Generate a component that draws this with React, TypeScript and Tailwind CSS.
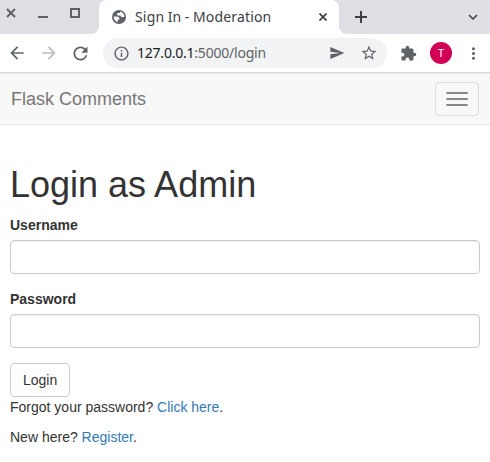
import {
  MdArrowBack,
  MdArrowForward,
  MdExpandMore,
  MdExtension,
  MdInfoOutline,
  MdMoreVert,
  MdRefresh,
  MdSend,
  MdStarBorder,
} from "react-icons/md";

function Globe() {
  return (
    <svg width="14" height="14" viewBox="0 0 14 14" className="shrink-0">
      <circle cx="7" cy="7" r="7" fill="#5f6368" />
      <path
        d="M8.2 1.7c2.4.4 4.2 2.6 4.2 5.2H10c-1 0-1.4-.6-1.4-1.4H6.2c-.8 0-1.2-.7-1.2-1.3 0-.8.6-1.2 1.3-1.2h.6c.8 0 1.3-.5 1.3-1.3z"
        fill="#fff"
      />
      <path
        d="M1.6 6.6h3.3c1.5 0 2.6 1 2.6 2.3v.5H5.9v1.4c0 .5-.3.9-.8 1.1-2.1-.8-3.500-2.800-3.500-5.300z"
        fill="#fff"
      />
    </svg>
  );
}

function TabStrip() {
  return (
    <div className="flex h-[34px] text-[#5f6368]">
      <div className="flex w-[99px] rounded-br-lg bg-[#dee0e6] pl-[5px] pt-[7px]">
        <svg width="82" height="13" viewBox="0 0 82 13" fill="none" stroke="currentColor" strokeWidth="2">
          <path d="M2 2l8 8M10 2l-8 8" />
          <path d="M33 10h10" />
          <path d="M66 2h8v8h-8z" />
        </svg>
      </div>
      <div className="w-[240px] bg-[#dee0e6]">
        <div className="flex h-full items-center rounded-t-lg bg-white pl-[13px] pr-3">
          <Globe />
          <span className="ml-[9px] w-[140px] whitespace-nowrap font-['Noto_Sans',sans-serif] text-[14px] leading-5 tracking-[0.17px] text-[#3c4043] [word-spacing:-0.4px]">
            Sign In - Moderation
          </span>
          <svg width="8" height="8" viewBox="0 0 8 8" stroke="#3c4043" strokeWidth="1.7" className="ml-auto">
            <path d="M.5.5l7 7M7.500.5l-7 7" />
          </svg>
        </div>
      </div>
      <div className="flex flex-1 items-center justify-between rounded-bl-lg bg-[#dee0e6] pl-4 pr-[8px] text-[#3c4043]">
        <svg width="12" height="12" viewBox="0 0 12 12" stroke="currentColor" strokeWidth="2">
          <path d="M6 0v12M0 6h12" />
        </svg>
        <MdExpandMore size={18} />
      </div>
    </div>
  );
}

function Toolbar() {
  return (
    <div className="flex h-[38px] items-center bg-white text-[#5f6368]">
      <MdArrowBack size={20} className="ml-[7px]" />
      <MdArrowForward size={20} className="ml-3 text-[#babcbe]" />
      <MdRefresh size={21} className="ml-[11px]" />
      <div className="ml-[12px] flex h-[30px] w-[284px] items-center rounded-full bg-[#f1f3f4] pl-[10px] pr-[9px]">
        <MdInfoOutline size={17} />
        <span className="ml-[7px] whitespace-nowrap font-['Noto_Sans',sans-serif] text-[14px] leading-5 tracking-[-0.22px] text-[#5f6368]">
          <span className="text-[#202124]">127.0.0.1</span>:5000/login
        </span>
        <MdSend size={16} className="ml-auto" />
        <MdStarBorder size={18} className="ml-[15px]" />
      </div>
      <MdExtension size={17} className="ml-[13px]" />
      <div className="ml-[13px] flex h-[22px] w-[22px] items-center justify-center rounded-full bg-[#d10056] font-['Roboto',sans-serif] text-[11px] text-white">
        <span className="pt-px">T</span>
      </div>
      <MdMoreVert size={19} className="ml-3" />
    </div>
  );
}

function Navbar() {
  return (
    <nav className="flex h-[51px] items-center justify-between border-b border-[#e7e7e7] bg-[#f8f8f8] pl-[11px] pr-[11px]">
      <a className="text-[18px] leading-5 text-[#777]">Flask Comments</a>
      <button
        aria-label="Toggle navigation"
        className="flex h-[34px] w-11 flex-col items-center justify-center gap-1 rounded border border-[#ddd]"
      >
        <span className="h-0.5 w-[22px] rounded-[1px] bg-[#888]" />
        <span className="h-0.5 w-[22px] rounded-[1px] bg-[#888]" />
        <span className="h-0.5 w-[22px] rounded-[1px] bg-[#888]" />
      </button>
    </nav>
  );
}

function Field({ label, type }: { label: string; type: string }) {
  return (
    <div className="mb-[15px]">
      <label className="mb-[5px] block font-bold">{label}</label>
      <input
        type={type}
        aria-label={label}
        className="block h-[34px] w-full rounded border border-[#ccc] bg-white px-3 shadow-[inset_0_1px_1px_rgba(0,0,0,0.075)] outline-none"
      />
    </div>
  );
}

export default function App() {
  return (
    <div className="h-[462px] w-[490px] overflow-hidden bg-white font-['Liberation_Sans',Arial,sans-serif] text-[14px] leading-5 text-[#333]">
      <TabStrip />
      <Toolbar />
      <div className="h-0.5 border-t border-[#dadada] bg-[#e8e8e8]" />
      <Navbar />
      <main className="px-[10px] pt-10">
        <h1 className="mb-[10px] text-[36px] font-normal leading-[40px]">Login as Admin</h1>
        <Field label="Username" type="text" />
        <Field label="Password" type="password" />
        <button className="block h-[34px] rounded border border-[#ccc] bg-white px-3">Login</button>
        <p className="mb-[10px]">
          Forgot your password? <a className="text-[#337ab7]">Click here</a>.
        </p>
        <p>
          New here? <a className="text-[#337ab7]">Register</a>.
        </p>
      </main>
    </div>
  );
}
